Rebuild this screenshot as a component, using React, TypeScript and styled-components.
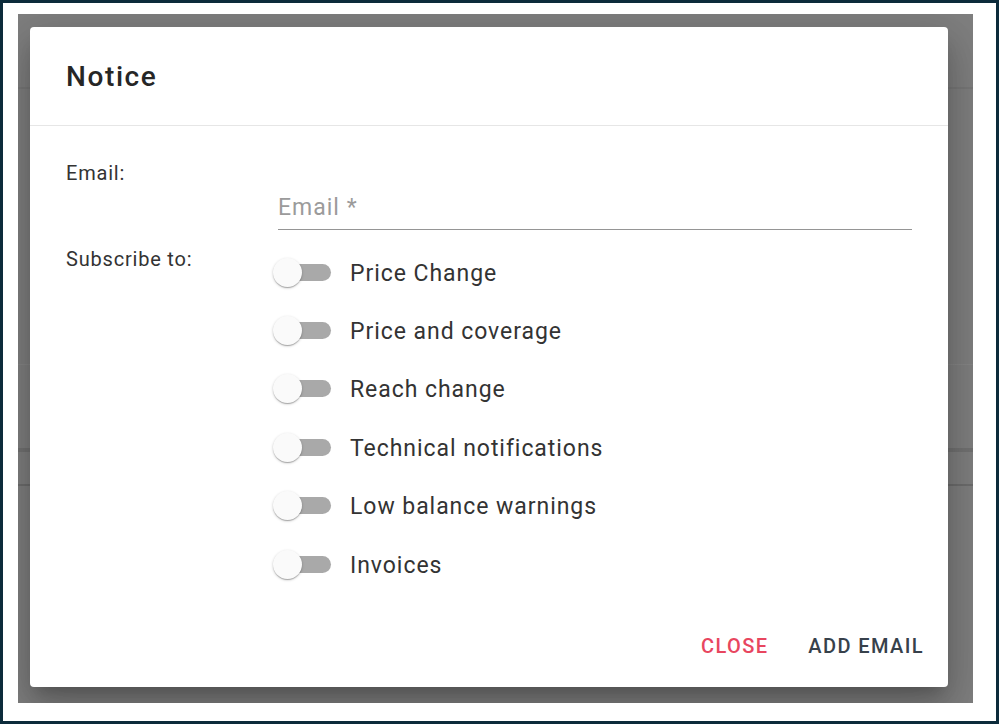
import styled, { createGlobalStyle } from "styled-components";

const GlobalStyle = createGlobalStyle`
  * { box-sizing: border-box; }
  html, body { margin: 0; padding: 0; background: #ffffff; }
  body { font-family: Roboto, "Noto Sans", "Liberation Sans", sans-serif; }
`;

const subscriptions = [
  "Price Change",
  "Price and coverage",
  "Reach change",
  "Technical notifications",
  "Low balance warnings",
  "Invoices",
];

export default function App() {
  return (
    <>
      <GlobalStyle />
      <Frame>
        <Backdrop>
          <Dialog>
            <Header>
              <Title>Notice</Title>
            </Header>
            <Body>
              <FormRow>
                <FieldLabel>Email:</FieldLabel>
                <InputField>
                  <Input placeholder="Email *" />
                </InputField>
              </FormRow>
              <SubscribeRow>
                <FieldLabel $offset={4}>Subscribe to:</FieldLabel>
                <SwitchList>
                  {subscriptions.map((name) => (
                    <SwitchRow key={name}>
                      <Switch>
                        <Track />
                        <Thumb />
                      </Switch>
                      <SwitchLabel>{name}</SwitchLabel>
                    </SwitchRow>
                  ))}
                </SwitchList>
              </SubscribeRow>
            </Body>
            <Footer>
              <ActionButton $tone="danger">Close</ActionButton>
              <ActionButton>Add Email</ActionButton>
            </Footer>
          </Dialog>
        </Backdrop>
      </Frame>
    </>
  );
}

const Frame = styled.div`
  width: 999px;
  height: 724px;
  border: 3px solid #0c2b3b;
  background: #ffffff;
  padding: 11px 23px 18px 15px;
`;

const Backdrop = styled.div`
  width: 100%;
  height: 100%;
  overflow: hidden;
  padding: 13px 25px 16px 12px;
  background:
    linear-gradient(to bottom,
      transparent 73px, rgba(0, 0, 0, 0.06) 73px, rgba(0, 0, 0, 0.06) 75px, transparent 75px,
      transparent 350px, rgba(255, 255, 255, 0.05) 350px, rgba(255, 255, 255, 0.05) 351px, transparent 351px,
      transparent 434px, rgba(0, 0, 0, 0.1) 434px, rgba(0, 0, 0, 0.1) 438px, transparent 438px,
      transparent 470px, rgba(0, 0, 0, 0.14) 470px, rgba(0, 0, 0, 0.14) 472px, transparent 472px),
    #7f7f7f;
`;

const Dialog = styled.div`
  width: 100%;
  height: 100%;
  background: #ffffff;
  border-radius: 4px;
  display: flex;
  flex-direction: column;
  box-shadow:
    0 11px 15px -7px rgba(0, 0, 0, 0.2),
    0 24px 38px 3px rgba(0, 0, 0, 0.14),
    0 9px 46px 8px rgba(0, 0, 0, 0.12);
`;

const Header = styled.div`
  height: 99px;
  padding: 0 36px;
  display: flex;
  align-items: center;
  border-bottom: 1px solid #e6e6e6;
`;

const Title = styled.h2`
  margin: 0;
  font-size: 28px;
  font-weight: 500;
  color: #262626;
  letter-spacing: 1.6px;
`;

const Body = styled.div`
  padding: 35px 36px 0 36px;
`;

const FormRow = styled.div`
  display: grid;
  grid-template-columns: 212px 1fr;
`;

const SubscribeRow = styled(FormRow)`
  margin-top: 13px;
`;

const FieldLabel = styled.div<{ $offset?: number }>`
  font-size: 20px;
  line-height: 24px;
  letter-spacing: 0.8px;
  color: #333333;
  padding-top: ${(p) => p.$offset ?? 0}px;
`;

const InputField = styled.div`
  margin-top: 35px;
  border-bottom: 1px solid #959595;
  padding-bottom: 9px;
`;

const Input = styled.input`
  display: block;
  width: 100%;
  border: 0;
  outline: none;
  padding: 0;
  font-family: inherit;
  font-size: 23px;
  letter-spacing: 1px;
  line-height: 24px;
  height: 24px;
  color: #333333;
  background: transparent;

  &::placeholder {
    color: #9b9b9b;
  }
`;

const SwitchList = styled.div`
  display: flex;
  flex-direction: column;
  margin-left: -5px;
`;

const SwitchRow = styled.div`
  height: 58.4px;
  display: flex;
  align-items: center;
`;

const Switch = styled.span`
  position: relative;
  width: 58px;
  height: 29px;
  flex: none;
`;

const Track = styled.span`
  position: absolute;
  left: 3px;
  top: 6px;
  width: 55px;
  height: 17px;
  border-radius: 9px;
  background: #a9a9a9;
`;

const Thumb = styled.span`
  position: absolute;
  left: 0;
  top: 0;
  width: 29px;
  height: 29px;
  border-radius: 50%;
  background: #fafafa;
  box-shadow:
    0 1px 3px rgba(0, 0, 0, 0.2),
    0 1px 1px rgba(0, 0, 0, 0.14),
    0 2px 1px -1px rgba(0, 0, 0, 0.12);
`;

const SwitchLabel = styled.span`
  margin-left: 19px;
  padding-top: 2px;
  font-size: 23px;
  color: #333333;
  letter-spacing: 0.95px;
`;

const Footer = styled.div`
  margin-top: auto;
  display: flex;
  justify-content: flex-end;
  align-items: center;
  gap: 40px;
  padding: 0 24px 23px 0;
  height: 59px;
`;

const ActionButton = styled.button<{ $tone?: "danger" }>`
  border: 0;
  background: transparent;
  padding: 0;
  font-family: inherit;
  font-size: 20px;
  font-weight: 500;
  letter-spacing: 1.4px;
  text-transform: uppercase;
  cursor: pointer;
  color: ${(p) => (p.$tone === "danger" ? "#e8465f" : "#37414b")};
`;
